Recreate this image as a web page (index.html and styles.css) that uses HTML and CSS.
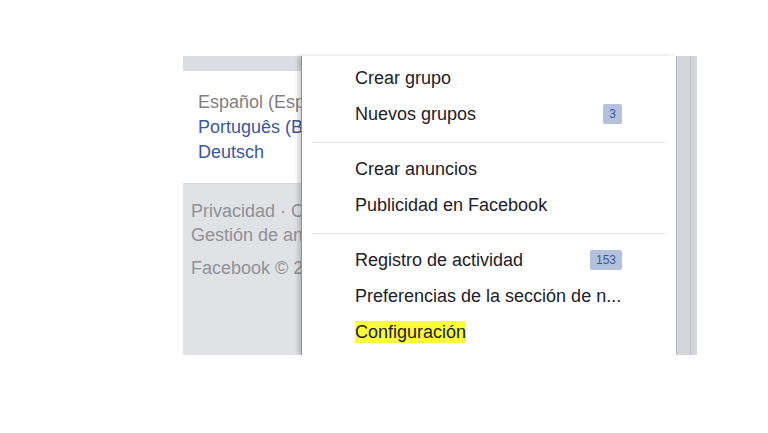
FILE: index.html
```html
<!DOCTYPE html>
<html lang="es">
<head>
<meta charset="utf-8">
<link rel="stylesheet" href="styles.css">
</head>
<body>
<div class="stage">
  <div class="side">
    <div class="strip"></div>
    <div class="langs">
      <div class="lang current">Español (España)</div>
      <div class="lang">Português (Brasil)</div>
      <div class="lang">Deutsch</div>
    </div>
    <div class="foot">
      <div class="foot-line">Privacidad · Condiciones · Publicidad</div>
      <div class="foot-line">Gestión de anuncios</div>
      <div class="foot-copy">Facebook © 2016</div>
    </div>
  </div>
  <div class="menu">
    <div class="item"><span>Crear grupo</span></div>
    <div class="item"><span>Nuevos grupos</span><span class="badge">3</span></div>
    <div class="sep"></div>
    <div class="item"><span>Crear anuncios</span></div>
    <div class="item"><span>Publicidad en Facebook</span></div>
    <div class="sep"></div>
    <div class="item"><span>Registro de actividad</span><span class="badge">153</span></div>
    <div class="item"><span class="ellip">Preferencias de la sección de n...</span></div>
    <div class="item"><span class="hl">Configuración</span></div>
  </div>
  <div class="scroll"><div class="scroll-line"></div></div>
</div>
</body>
</html>
```
FILE: styles.css
```css
html, body {
  margin: 0;
  padding: 0;
  background: #ffffff;
}
body {
  font-family: "Liberation Sans", Arial, sans-serif;
  font-size: 18px;
}
.stage {
  display: flex;
  margin: 56px 0 0 183px;
  height: 299px;
}
.side {
  flex: 0 0 118px;
  display: flex;
  flex-direction: column;
  overflow: hidden;
  white-space: nowrap;
}
.strip {
  height: 15px;
  background: #dcdde2;
}
.langs {
  background: #ffffff;
  height: 93px;
  padding: 19px 0 0 15px;
  border-bottom: 1px solid #d6d7db;
}
.lang {
  line-height: 25px;
  color: #3b5998;
}
.lang.current {
  color: #7f7f7f;
}
.foot {
  flex: 1;
  background: #e1e2e6;
  padding: 15px 0 0 8px;
  color: #8f9196;
}
.foot-line {
  line-height: 24px;
}
.foot-copy {
  line-height: 24px;
  margin-top: 9px;
}
.menu {
  flex: 0 0 375px;
  box-sizing: border-box;
  background: #ffffff;
  border-left: 1px solid #8e9096;
  box-shadow: -3px 0 4px rgba(0, 0, 0, 0.18);
  padding: 4px 0 0 0;
  position: relative;
  z-index: 1;
}
.item {
  height: 36px;
  line-height: 36px;
  padding: 0 54px 0 53px;
  display: flex;
  justify-content: space-between;
  align-items: center;
  color: #1d2129;
  white-space: nowrap;
}
.sep {
  height: 1px;
  background: #dddfe2;
  margin: 10px 11px 8px 11px;
}
.badge {
  font-size: 12px;
  line-height: 20px;
  height: 20px;
  padding: 0 6px;
  background: #b3c1dc;
  color: #3b5998;
  border-radius: 2px;
}
.hl {
  background: #fcfc3a;
  line-height: 22px;
}
.scroll {
  flex: 0 0 21px;
  box-sizing: border-box;
  background: #d5d6db;
  border-left: 1px solid #b8bac0;
  display: flex;
  justify-content: flex-end;
  padding-right: 6px;
}
.scroll-line {
  width: 1px;
  background: #bfc1c6;
}
```
